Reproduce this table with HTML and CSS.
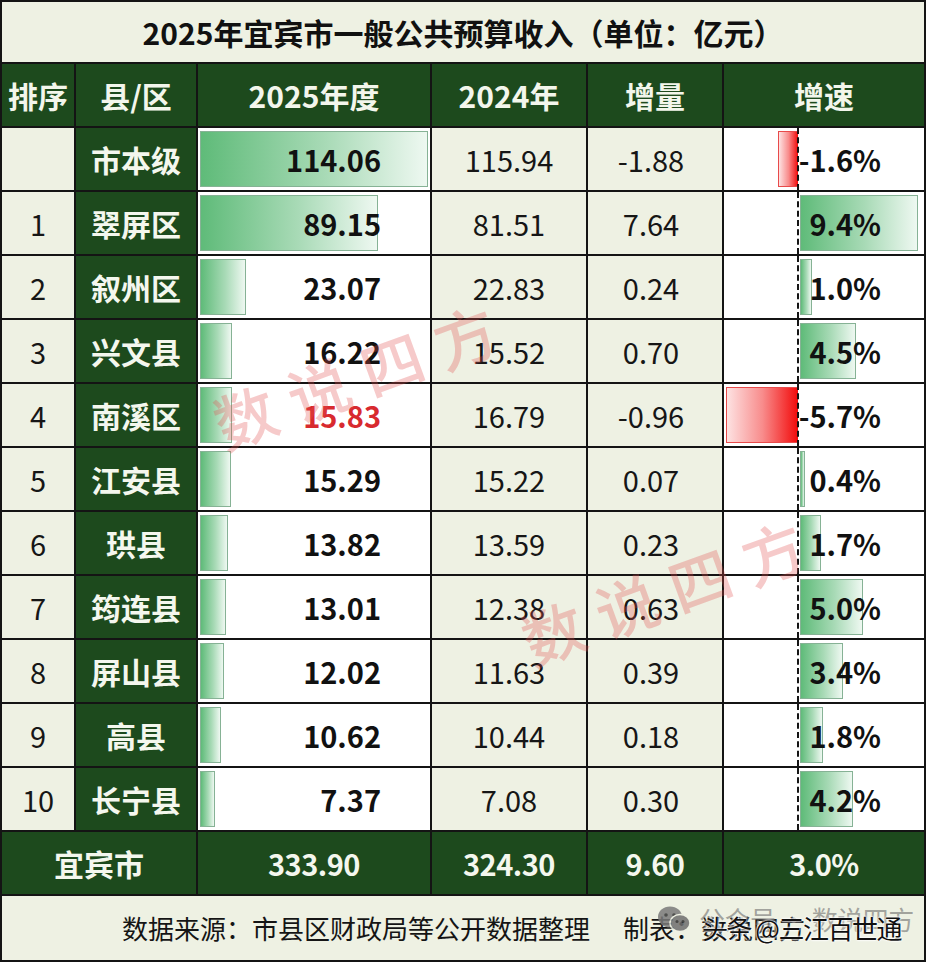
FILE: index.html
```html
<!DOCTYPE html>
<html lang="zh-CN">
<head>
<meta charset="utf-8">
<title>2025年宜宾市一般公共预算收入</title>
<link rel="stylesheet" href="styles.css">
</head>
<body>
<div class="sheet">
  <div class="title">2025年宜宾市一般公共预算收入（单位：亿元）</div>

  <div class="hd">排序</div>
  <div class="hd">县/区</div>
  <div class="hd">2025年度</div>
  <div class="hd">2024年</div>
  <div class="hd">增量</div>
  <div class="hd">增速</div>

  <div class="c-rank"></div>
  <div class="c-name">市本级</div>
  <div class="c-cur"><span class="bar" style="width:228px"></span><span class="val">114.06</span></div>
  <div class="c-prev">115.94</div>
  <div class="c-inc">-1.88</div>
  <div class="c-rate"><span class="neg" style="width:20px"></span><span class="axis"></span><span class="val">-1.6%</span></div>

  <div class="c-rank">1</div>
  <div class="c-name">翠屏区</div>
  <div class="c-cur"><span class="bar" style="width:178px"></span><span class="val">89.15</span></div>
  <div class="c-prev">81.51</div>
  <div class="c-inc">7.64</div>
  <div class="c-rate"><span class="pos" style="width:118px"></span><span class="axis"></span><span class="val">9.4%</span></div>

  <div class="c-rank">2</div>
  <div class="c-name">叙州区</div>
  <div class="c-cur"><span class="bar" style="width:46px"></span><span class="val">23.07</span></div>
  <div class="c-prev">22.83</div>
  <div class="c-inc">0.24</div>
  <div class="c-rate"><span class="pos" style="width:12px"></span><span class="axis"></span><span class="val">1.0%</span></div>

  <div class="c-rank">3</div>
  <div class="c-name">兴文县</div>
  <div class="c-cur"><span class="bar" style="width:32px"></span><span class="val">16.22</span></div>
  <div class="c-prev">15.52</div>
  <div class="c-inc">0.70</div>
  <div class="c-rate"><span class="pos" style="width:56px"></span><span class="axis"></span><span class="val">4.5%</span></div>

  <div class="c-rank">4</div>
  <div class="c-name">南溪区</div>
  <div class="c-cur"><span class="bar" style="width:32px"></span><span class="val neg-text">15.83</span></div>
  <div class="c-prev">16.79</div>
  <div class="c-inc">-0.96</div>
  <div class="c-rate"><span class="neg" style="width:72px"></span><span class="axis"></span><span class="val">-5.7%</span></div>

  <div class="c-rank">5</div>
  <div class="c-name">江安县</div>
  <div class="c-cur"><span class="bar" style="width:31px"></span><span class="val">15.29</span></div>
  <div class="c-prev">15.22</div>
  <div class="c-inc">0.07</div>
  <div class="c-rate"><span class="pos" style="width:5px"></span><span class="axis"></span><span class="val">0.4%</span></div>

  <div class="c-rank">6</div>
  <div class="c-name">珙县</div>
  <div class="c-cur"><span class="bar" style="width:28px"></span><span class="val">13.82</span></div>
  <div class="c-prev">13.59</div>
  <div class="c-inc">0.23</div>
  <div class="c-rate"><span class="pos" style="width:21px"></span><span class="axis"></span><span class="val">1.7%</span></div>

  <div class="c-rank">7</div>
  <div class="c-name">筠连县</div>
  <div class="c-cur"><span class="bar" style="width:26px"></span><span class="val">13.01</span></div>
  <div class="c-prev">12.38</div>
  <div class="c-inc">0.63</div>
  <div class="c-rate"><span class="pos" style="width:63px"></span><span class="axis"></span><span class="val">5.0%</span></div>

  <div class="c-rank">8</div>
  <div class="c-name">屏山县</div>
  <div class="c-cur"><span class="bar" style="width:24px"></span><span class="val">12.02</span></div>
  <div class="c-prev">11.63</div>
  <div class="c-inc">0.39</div>
  <div class="c-rate"><span class="pos" style="width:43px"></span><span class="axis"></span><span class="val">3.4%</span></div>

  <div class="c-rank">9</div>
  <div class="c-name">高县</div>
  <div class="c-cur"><span class="bar" style="width:21px"></span><span class="val">10.62</span></div>
  <div class="c-prev">10.44</div>
  <div class="c-inc">0.18</div>
  <div class="c-rate"><span class="pos" style="width:23px"></span><span class="axis"></span><span class="val">1.8%</span></div>

  <div class="c-rank">10</div>
  <div class="c-name">长宁县</div>
  <div class="c-cur"><span class="bar" style="width:15px"></span><span class="val">7.37</span></div>
  <div class="c-prev">7.08</div>
  <div class="c-inc">0.30</div>
  <div class="c-rate"><span class="pos" style="width:53px"></span><span class="axis"></span><span class="val">4.2%</span></div>

  <div class="tot tot-name">宜宾市</div>
  <div class="tot">333.90</div>
  <div class="tot">324.30</div>
  <div class="tot">9.60</div>
  <div class="tot">3.0%</div>

  <div class="foot">
    <span class="src">数据来源：市县区财政局等公开数据整理</span>
    <span class="maker">制表：数说四方</span>
    <svg class="wx" viewBox="0 0 34 26" width="34" height="26" aria-hidden="true">
      <ellipse cx="13" cy="11" rx="12" ry="10.5" fill="#7a7a7a"/>
      <circle cx="9" cy="9" r="1.8" fill="#333"/>
      <circle cx="17" cy="9" r="1.8" fill="#333"/>
      <ellipse cx="23" cy="17" rx="10" ry="8.5" fill="#6e6e6e" stroke="#eef1e3" stroke-width="1.5"/>
      <circle cx="20" cy="15.5" r="1.5" fill="#2a2a2a"/>
      <circle cx="26" cy="15.5" r="1.5" fill="#2a2a2a"/>
    </svg>
    <span class="gzh">公众号 · 数说四方</span>
    <span class="tt">头条 @三江百世通</span>
  </div>

  <div class="wm wm1">数说四方</div>
  <div class="wm wm2">数说四方</div>
</div>
</body>
</html>
```

FILE: styles.css
```css
html, body {
  margin: 0;
  padding: 0;
  background: #eef1e3;
}

.sheet {
  position: relative;
  width: 926px;
  height: 962px;
  box-sizing: border-box;
  display: grid;
  grid-template-columns: 72px 120px 232px 154px 134px 200px;
  grid-template-rows: 60px repeat(13, 62px) 64px;
  gap: 2px;
  padding: 2px;
  background: #141414;
  font-family: "Noto Sans CJK SC", "Noto Sans", sans-serif;
  color: #111;
  overflow: hidden;
}

.title {
  grid-column: 1 / -1;
  background: #eef1e3;
  display: flex;
  align-items: center;
  justify-content: center;
  font-size: 30px;
  font-weight: 700;
  color: #111;
}

.hd {
  background: #1d4a1d;
  color: #f3f6ec;
  font-size: 30px;
  font-weight: 700;
  display: flex;
  align-items: center;
  justify-content: center;
}

.c-rank, .c-prev, .c-inc {
  background: #eef1e3;
  display: flex;
  align-items: center;
  justify-content: center;
  font-size: 29px;
  font-weight: 400;
  color: #161616;
}

.c-inc {
  padding-right: 8px;
}

.c-name {
  background: #1d4a1d;
  color: #f4f7ee;
  font-size: 30px;
  font-weight: 700;
  display: flex;
  align-items: center;
  justify-content: center;
}

.c-cur {
  background: #fff;
  display: grid;
  grid-template-columns: 1fr;
  grid-template-rows: 1fr;
}

.c-cur .bar {
  grid-area: 1 / 1;
  justify-self: start;
  align-self: stretch;
  margin: 3px 0 3px 2px;
  box-sizing: border-box;
  border: 1.5px solid #86b295;
  background: linear-gradient(90deg, #5fbb79 0%, #a8dab6 55%, #eef8f1 100%);
}

.val {
  font-size: 29px;
  font-weight: 700;
  color: #111;
  align-self: center;
  justify-self: end;
  line-height: 1;
}

.c-cur .val {
  grid-area: 1 / 1;
  padding-right: 49px;
}

.c-cur .neg-text {
  color: #d82a2f;
}

.c-rate {
  background: #fff;
  display: grid;
  grid-template-columns: 74px 1fr;
  grid-template-rows: 1fr;
}

.c-rate .neg {
  grid-column: 1;
  grid-row: 1;
  justify-self: end;
  align-self: stretch;
  margin: 3px 0;
  box-sizing: border-box;
  border: 1.5px solid #e84a4a;
  border-right: none;
  background: linear-gradient(90deg, #fde2e2 0%, #f88c8c 50%, #f20a0a 100%);
}

.c-rate .pos {
  grid-column: 2;
  grid-row: 1;
  justify-self: start;
  align-self: stretch;
  margin: 3px 0 3px 2px;
  box-sizing: border-box;
  border: 1.5px solid #86b295;
  background: linear-gradient(90deg, #5fbb79 0%, #a8dab6 55%, #eef8f1 100%);
}

.c-rate .axis {
  grid-column: 2;
  grid-row: 1;
  justify-self: start;
  align-self: stretch;
  width: 0;
  border-left: 2px dashed #151515;
  margin-left: -1px;
}

.c-rate .val {
  grid-column: 1 / -1;
  grid-row: 1;
  padding-right: 43px;
}

.tot {
  background: #1d4a1d;
  color: #f4f7ee;
  font-size: 29px;
  font-weight: 700;
  display: flex;
  align-items: center;
  justify-content: center;
  letter-spacing: -0.5px;
}

.tot-name {
  grid-column: 1 / 3;
  font-size: 30px;
  letter-spacing: 0;
}

.foot {
  grid-column: 1 / -1;
  background: #eef1e3;
  position: relative;
  display: flex;
  align-items: center;
  padding-left: 120px;
  padding-bottom: 2px;
  font-size: 26px;
  color: #151515;
  gap: 33px;
  white-space: nowrap;
}

.foot .wx {
  position: absolute;
  left: 655px;
  top: 10px;
  opacity: 0.85;
}

.foot .gzh {
  position: absolute;
  left: 697px;
  top: 4px;
  font-size: 26px;
  color: rgba(110, 110, 110, 0.6);
  letter-spacing: -0.5px;
}

.foot .tt {
  position: absolute;
  left: 700px;
  top: 13px;
  font-size: 26px;
  color: #111;
  letter-spacing: -1.5px;
  text-shadow: 0 0 2px #fff, 0 0 2px #fff, 0 0 3px #fff;
}

.wm {
  position: absolute;
  font-size: 62px;
  font-weight: 500;
  color: rgba(226, 80, 80, 0.3);
  letter-spacing: 16px;
  white-space: nowrap;
  transform: translate(-50%, -50%) rotate(-20deg);
  pointer-events: none;
  font-family: "Noto Sans CJK SC", sans-serif;
}

.wm1 {
  left: 362px;
  top: 372px;
}

.wm2 {
  left: 670px;
  top: 588px;
}
```
